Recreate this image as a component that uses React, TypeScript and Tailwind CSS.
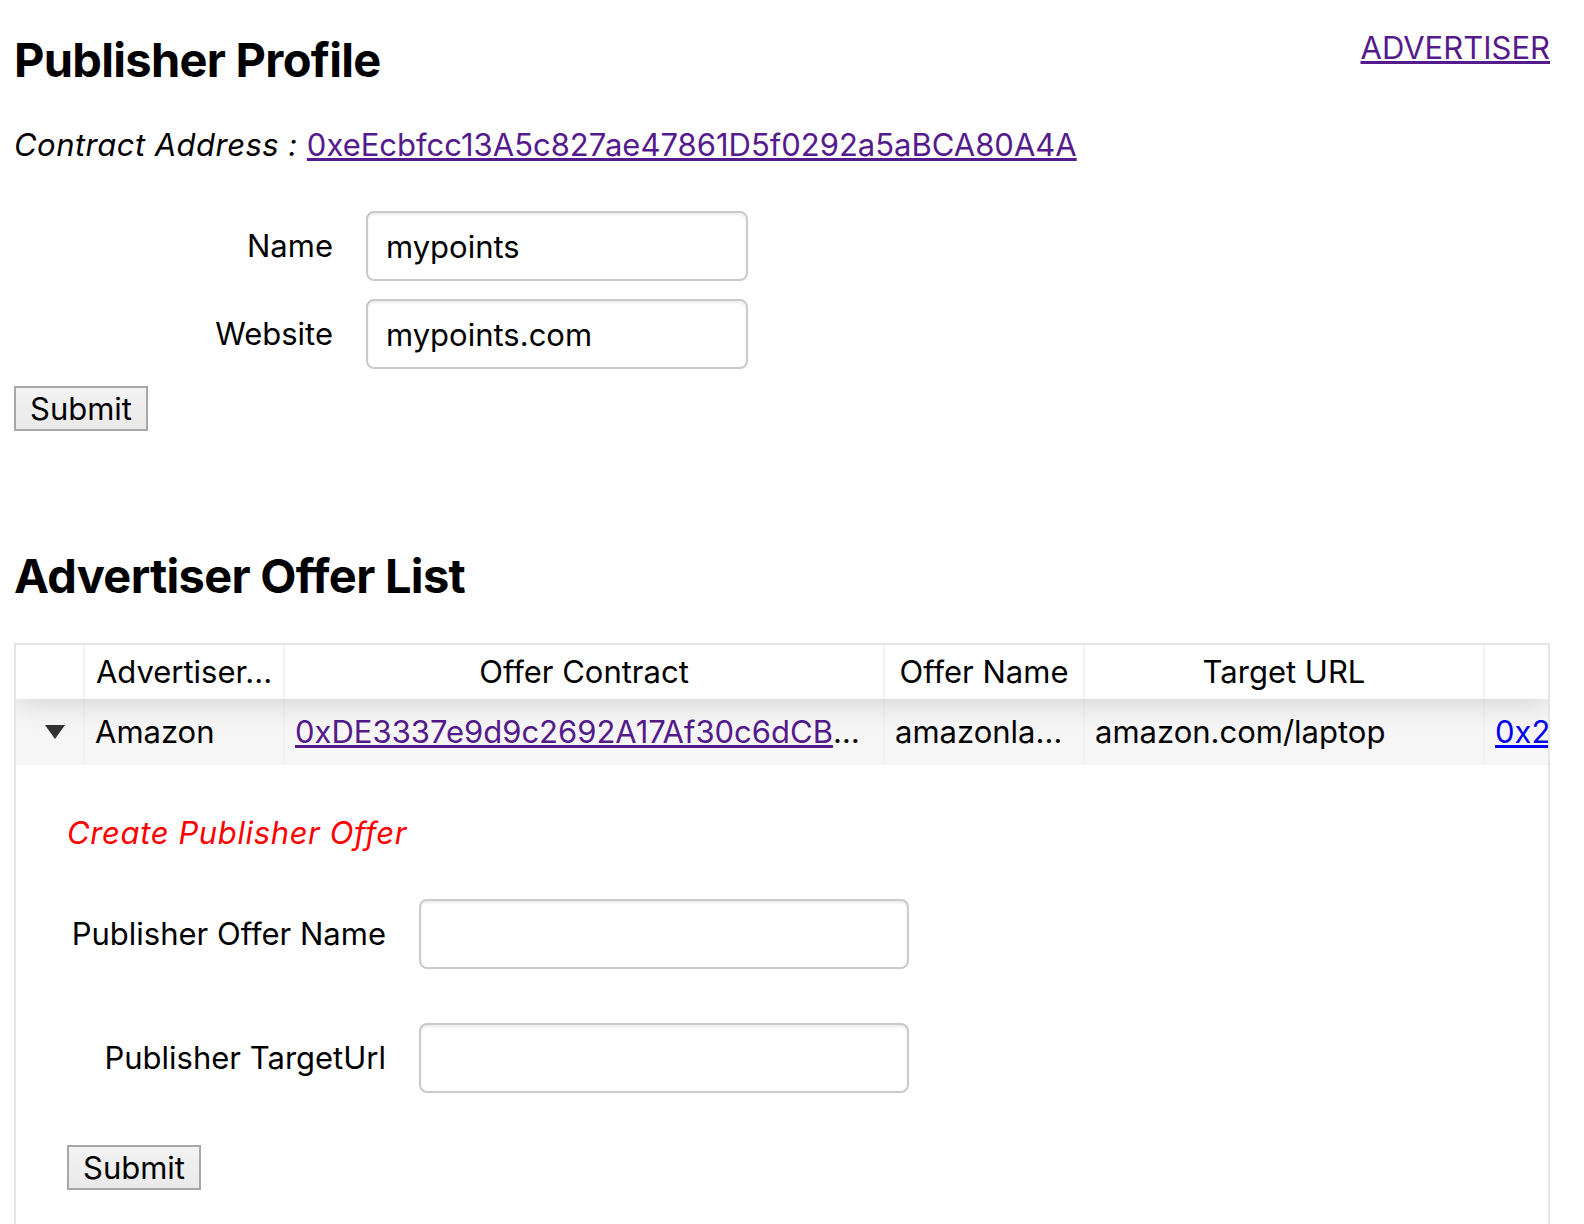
import React from 'react';

const cols = [
  { key: 'exp', w: 'w-[69px]' },
  { key: 'adv', w: 'w-[200px]', title: 'Advertiser Name' },
  { key: 'contract', w: 'w-[600px]', title: 'Offer Contract' },
  { key: 'name', w: 'w-[200px]', title: 'Offer Name' },
  { key: 'url', w: 'w-[400px]', title: 'Target URL' },
  { key: 'addr', w: 'w-[500px]', title: 'Advertiser Address' },
];

const FormRow = ({ label, value, inputW }: { label: string; value?: string; inputW: string }) => (
  <div className="flex items-center gap-[33px]">
    <label className="w-[319px] shrink-0 text-right">{label}</label>
    <input
      readOnly
      value={value ?? ''}
      className={`${inputW} h-[70px] rounded-[8px] border-2 border-[#cacaca] bg-white pl-[18px] text-[31px] outline-none shadow-[inset_0_2px_3px_rgba(0,0,0,0.08)]`}
    />
  </div>
);

const SubmitButton = () => (
  <button className="h-[45px] border-2 border-[#a8a8a8] bg-gradient-to-b from-[#f3f3f3] to-[#e9e9e9] px-[14px] text-[31px] leading-[36px] text-black">
    Submit
  </button>
);

export default function App() {
  return (
    <div className="min-h-screen bg-white pl-[14px] pr-[34px] font-['Inter',sans-serif] text-[31px] leading-[36px] text-black">
      {/* Header */}
      <div className="flex items-start justify-between">
        <h2 className="mt-[32px] text-[47px] font-bold leading-[56px] tracking-[-0.015em]">Publisher Profile</h2>
        <a href="#" className="mt-[30px] text-[#551a8b] underline">ADVERTISER</a>
      </div>

      <p className="mt-[39px]">
        <span className="italic tracking-[0.015em]">Contract Address : </span>
        <a href="#" className="text-[#551a8b] underline">0xeEcbfcc13A5c827ae47861D5f0292a5aBCA80A4A</a>
      </p>

      {/* Profile form */}
      <div className="mt-[48px] flex flex-col gap-[18px]">
        <FormRow label="Name" value="mypoints" inputW="w-[382px]" />
        <FormRow label="Website" value="mypoints.com" inputW="w-[382px]" />
      </div>
      <div className="mt-[17px]">
        <SubmitButton />
      </div>

      <h2 className="mt-[117px] text-[47px] font-bold leading-[56px] tracking-[-0.015em]">Advertiser Offer List</h2>

      {/* Offer table */}
      <div className="mt-[39px] overflow-hidden border-2 border-[#e5e5e5]">
        <div className="relative z-10 flex bg-white shadow-[0_4px_30px_0_rgba(0,0,0,0.15)]">
          {cols.map((c) => (
            <div
              key={c.key}
              className={`${c.w} shrink-0 overflow-hidden text-ellipsis whitespace-nowrap border-r-2 border-[#f2f2f2] px-[10px] py-[9px] text-center`}
            >
              {c.title === 'Advertiser Name' ? 'Advertiser...' : c.title ?? ''}
            </div>
          ))}
        </div>
        <div className="flex bg-[#f6f6f6]">
          <div className="flex w-[69px] shrink-0 items-center border-r-2 border-[#f0f0f0] pl-[29px]">
            <span className="h-0 w-0 border-x-[10px] border-t-[14px] border-x-transparent border-t-[#333333]" />
          </div>
          <div className="w-[200px] shrink-0 overflow-hidden text-ellipsis whitespace-nowrap border-r-2 border-[#f0f0f0] px-[10px] py-[15px]">Amazon</div>
          <div className="w-[600px] shrink-0 overflow-hidden text-ellipsis whitespace-nowrap border-r-2 border-[#f0f0f0] px-[10px] py-[15px]">
            <a href="#" className="text-[#551a8b] underline">0xDE3337e9d9c2692A17Af30c6dCB5a1F02e8B7c4</a>
          </div>
          <div className="w-[200px] shrink-0 overflow-hidden text-ellipsis whitespace-nowrap border-r-2 border-[#f0f0f0] px-[10px] py-[15px]">amazonlaptop</div>
          <div className="w-[400px] shrink-0 overflow-hidden text-ellipsis whitespace-nowrap border-r-2 border-[#f0f0f0] px-[10px] py-[15px]">amazon.com/laptop</div>
          <div className="w-[500px] shrink-0 overflow-hidden text-ellipsis whitespace-nowrap border-r-2 border-[#f0f0f0] px-[10px] py-[15px]">
            <a href="#" className="text-[#0000ee] underline">0x2a7C91bE04d5F3e8A6c1D9b27E0f4aB53c8D16e9</a>
          </div>
        </div>

        {/* Sub component */}
        <div className="pb-[80px] pl-[51px]">
          <p className="mt-[50px] italic tracking-[0.02em] text-[#ff0000]">Create Publisher Offer</p>
          <div className="mt-[48px] flex flex-col gap-[54px]">
            <FormRow label="Publisher Offer Name" inputW="w-[490px]" />
            <FormRow label="Publisher TargetUrl" inputW="w-[490px]" />
          </div>
          <div className="mt-[52px]">
            <SubmitButton />
          </div>
        </div>
      </div>
    </div>
  );
}
